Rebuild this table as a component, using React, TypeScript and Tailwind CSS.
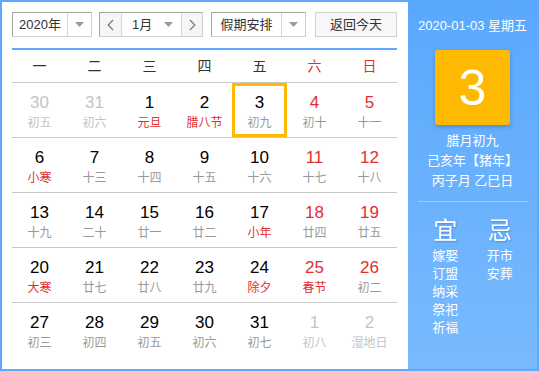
import React from "react";

type Day = { n: number; l: string; fade?: boolean; redN?: boolean; redL?: boolean; sel?: boolean };

const rows: Day[][] = [
  [
    { n: 30, l: "初五", fade: true },
    { n: 31, l: "初六", fade: true },
    { n: 1, l: "元旦", redL: true },
    { n: 2, l: "腊八节", redL: true },
    { n: 3, l: "初九", sel: true },
    { n: 4, l: "初十", redN: true },
    { n: 5, l: "十一", redN: true },
  ],
  [
    { n: 6, l: "小寒", redL: true },
    { n: 7, l: "十三" },
    { n: 8, l: "十四" },
    { n: 9, l: "十五" },
    { n: 10, l: "十六" },
    { n: 11, l: "十七", redN: true },
    { n: 12, l: "十八", redN: true },
  ],
  [
    { n: 13, l: "十九" },
    { n: 14, l: "二十" },
    { n: 15, l: "廿一" },
    { n: 16, l: "廿二" },
    { n: 17, l: "小年", redL: true },
    { n: 18, l: "廿四", redN: true },
    { n: 19, l: "廿五", redN: true },
  ],
  [
    { n: 20, l: "大寒", redL: true },
    { n: 21, l: "廿七" },
    { n: 22, l: "廿八" },
    { n: 23, l: "廿九" },
    { n: 24, l: "除夕", redL: true },
    { n: 25, l: "春节", redN: true, redL: true },
    { n: 26, l: "初二", redN: true },
  ],
  [
    { n: 27, l: "初三" },
    { n: 28, l: "初四" },
    { n: 29, l: "初五" },
    { n: 30, l: "初六" },
    { n: 31, l: "初七" },
    { n: 1, l: "初八", fade: true },
    { n: 2, l: "湿地日", fade: true },
  ],
];

const weekdays = ["一", "二", "三", "四", "五", "六", "日"];

function Arrow() {
  return (
    <svg width="9" height="5" viewBox="0 0 9 5">
      <path d="M0 0 L9 0 L4.5 5 Z" fill="#9a9a9a" />
    </svg>
  );
}

function Chevron({ dir }: { dir: "l" | "r" }) {
  return (
    <svg width="7" height="12" viewBox="0 0 7 12">
      <path
        d={dir === "l" ? "M6 1 L1.2 6 L6 11" : "M1 1 L5.8 6 L1 11"}
        fill="none"
        stroke="#777"
        strokeWidth="1.2"
      />
    </svg>
  );
}

export default function App() {
  return (
    <div
      className="w-[539px] h-[371px] border-2 border-[#5ca9fd] flex bg-white"
      style={{ fontFamily: '"Liberation Sans", "Noto Sans CJK SC", sans-serif' }}
    >
      <div className="w-[406px] pl-[10px] pr-[11px] pt-[10px] flex flex-col">
        {/* controls */}
        <div className="flex h-[25px] text-[13px] text-[#333]">
          <div className="w-[80px] flex border border-[#cfcfcf] border-t-[#a6a6a6] border-l-[#a6a6a6]">
            <div className="flex-1 flex items-center justify-center">2020年</div>
            <div className="w-[24px] border-l border-[#d6d6d6] flex items-center justify-center">
              <Arrow />
            </div>
          </div>
          <div className="ml-[7px] w-[104px] flex border border-[#cfcfcf] border-t-[#a6a6a6] border-l-[#a6a6a6]">
            <div className="w-[22px] bg-[#f6f6f6] flex items-center justify-center border-r border-[#d6d6d6]">
              <Chevron dir="l" />
            </div>
            <div className="flex-1 flex items-center pl-[10px] pr-[8px] justify-between">
              <span>1月</span>
              <Arrow />
            </div>
            <div className="w-[21px] bg-[#f6f6f6] flex items-center justify-center border-l border-[#d6d6d6]">
              <Chevron dir="r" />
            </div>
          </div>
          <div className="ml-[8px] w-[95px] flex border border-[#cfcfcf] border-t-[#a6a6a6] border-l-[#a6a6a6]">
            <div className="flex-1 flex items-center justify-center">假期安排</div>
            <div className="w-[24px] border-l border-[#d6d6d6] flex items-center justify-center">
              <Arrow />
            </div>
          </div>
          <div className="ml-[9px] w-[82px] flex items-center justify-center border border-[#d2d2d2] bg-[#f7f7f7]">
            返回今天
          </div>
        </div>

        <div className="mt-[11px] h-[2px] bg-[#5ca9fd]" />

        <div className="grid grid-cols-7 h-[33px] border-b border-[#c8c8c8] text-[14px]">
          {weekdays.map((w, i) => (
            <div
              key={w}
              className={`flex items-center justify-center ${i >= 5 ? "text-[#e22e2e]" : "text-[#333]"}`}
            >
              {w}
            </div>
          ))}
        </div>

        {rows.map((row, ri) => (
          <div
            key={ri}
            className={`grid grid-cols-7 h-[55px] ${ri < rows.length - 1 ? "border-b border-[#c8c8c8]" : ""}`}
          >
            {row.map((d, di) => {
              const numColor = d.fade ? "text-[#c4c4c4]" : d.redN ? "text-[#e22e2e]" : "text-[#000]";
              const lColor = d.fade ? "text-[#c4c4c4]" : d.redL ? "text-[#e22e2e]" : "text-[#999]";
              return (
                <div key={di} className="relative flex flex-col items-center pt-[10px]">
                  {d.sel && (
                    <div className="absolute inset-0 border-[3px] border-[#ffb900]" />
                  )}
                  <div className={`text-[17px] leading-[20px] ${numColor}`}>{d.n}</div>
                  <div className={`mt-[2px] text-[12px] leading-[16px] ${lColor}`}>{d.l}</div>
                </div>
              );
            })}
          </div>
        ))}
      </div>

      <div className="flex-1 bg-gradient-to-b from-[#5aa8fe] to-[#78bafd] text-white flex flex-col items-center pt-[15px]">
        <div className="text-[13px] leading-[18px]">2020-01-03 星期五</div>
        <div className="mt-[15px] w-[75px] h-[75px] rounded-[3px] bg-[#ffb900] shadow-[0_2px_4px_rgba(0,0,0,0.2)] flex items-center justify-center text-[50px] leading-none">
          3
        </div>
        <div className="mt-[6px] text-[13px] leading-[20px] text-center">
          <div>腊月初九</div>
          <div>己亥年【猪年】</div>
          <div>丙子月 乙巳日</div>
        </div>
        <div className="mt-[10px] h-px w-[110px] bg-white/30" />
        <div className="mt-[15px] w-full px-[10px] grid grid-cols-2">
          <div className="flex flex-col items-center">
            <div className="text-[24px] leading-[28px] [text-shadow:1px_1px_2px_rgba(0,60,140,0.35)]">宜</div>
            <div className="mt-[2px] text-[13px] leading-[18px] flex flex-col">
              <span>嫁娶</span>
              <span>订盟</span>
              <span>纳采</span>
              <span>祭祀</span>
              <span>祈福</span>
            </div>
          </div>
          <div className="flex flex-col items-center">
            <div className="text-[24px] leading-[28px] [text-shadow:1px_1px_2px_rgba(0,60,140,0.35)]">忌</div>
            <div className="mt-[2px] text-[13px] leading-[18px] flex flex-col">
              <span>开市</span>
              <span>安葬</span>
            </div>
          </div>
        </div>
      </div>
    </div>
  );
}
